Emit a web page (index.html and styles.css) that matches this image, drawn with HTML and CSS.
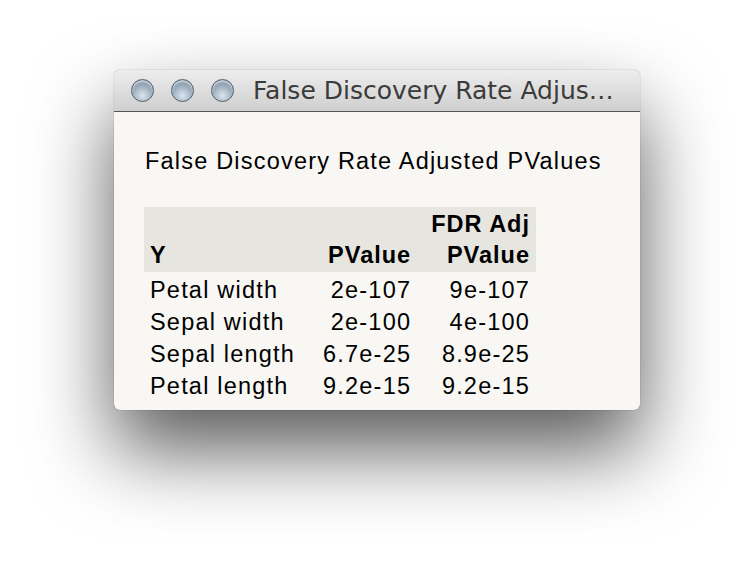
FILE: index.html
```html
<!DOCTYPE html>
<html lang="en">
<head>
	<meta charset="UTF-8">
	<title>False Discovery Rate Adjusted PValues</title>
	<link rel="stylesheet" href="styles.css">
</head>
<body>
	<div class="window">
		<div class="titlebar">
			<div class="lights">
				<span class="light"></span>
				<span class="light"></span>
				<span class="light"></span>
			</div>
			<div class="title">False Discovery Rate Adjus…</div>
		</div>
		<div class="content">
			<p class="heading">False Discovery Rate Adjusted PValues</p>
			<table class="results">
				<thead>
					<tr>
						<th class="name"><br>Y</th>
						<th class="num"><br>PValue</th>
						<th class="num fdr">FDR Adj<br>PValue</th>
					</tr>
				</thead>
				<tbody>
					<tr><td class="name">Petal width</td><td class="num">2e-107</td><td class="num fdr">9e-107</td></tr>
					<tr><td class="name">Sepal width</td><td class="num">2e-100</td><td class="num fdr">4e-100</td></tr>
					<tr><td class="name">Sepal length</td><td class="num">6.7e-25</td><td class="num fdr">8.9e-25</td></tr>
					<tr><td class="name">Petal length</td><td class="num">9.2e-15</td><td class="num fdr">9.2e-15</td></tr>
				</tbody>
			</table>
		</div>
	</div>
</body>
</html>
```

FILE: styles.css
```css
html,
body {
	height: 100%;
}

body {
	margin: 0;
	padding: 70px 0 0 114px;
	box-sizing: border-box;
	background: #ffffff;
	font-family: "Liberation Sans", Arial, sans-serif;
}

.window {
	width: 526px;
	height: 340px;
	border-radius: 6px;
	overflow: hidden;
	background: #f8f7f4;
	box-shadow: 0 40px 80px rgba(0, 0, 0, 0.65), 0 0 1px rgba(0, 0, 0, 0.6);
}

.titlebar {
	height: 41px;
	display: flex;
	align-items: center;
	background: linear-gradient(#ededed, #cfcfcf);
	border-bottom: 1px solid #555555;
	padding-left: 17px;
}

.lights {
	display: flex;
	gap: 17px;
}

.light {
	width: 23px;
	height: 23px;
	border-radius: 50%;
	box-sizing: border-box;
	border: 1px solid #55626f;
	background: radial-gradient(circle at 50% 75%, #dce7f0 0%, #a3b5c4 45%, #6a7f92 100%);
	box-shadow: inset 0 2px 2px rgba(255, 255, 255, 0.6);
}

.title {
	margin-left: 19px;
	font-family: "DejaVu Sans", sans-serif;
	font-size: 25px;
	color: #3b3b3b;
	white-space: nowrap;
}

.content {
	padding: 0 0 0 30px;
}

.heading {
	margin: 36px 0 32px 1px;
	font-size: 23.5px;
	letter-spacing: 1.2px;
	color: #000000;
}

.results {
	border-collapse: collapse;
	font-size: 23.5px;
	letter-spacing: 1.2px;
	color: #000000;
}

.results th {
	background: #e6e5df;
	font-weight: bold;
	line-height: 31px;
	padding: 2px 6px 1px;
	vertical-align: bottom;
	letter-spacing: 1px;
}

.results td {
	line-height: 32px;
	padding: 2px 6px 0;
}

.results tbody tr + tr td {
	padding-top: 0;
}

.results .name {
	text-align: left;
}

.results .num {
	text-align: right;
	padding-left: 22px;
}

.results .fdr {
	padding-left: 14px;
}
```
